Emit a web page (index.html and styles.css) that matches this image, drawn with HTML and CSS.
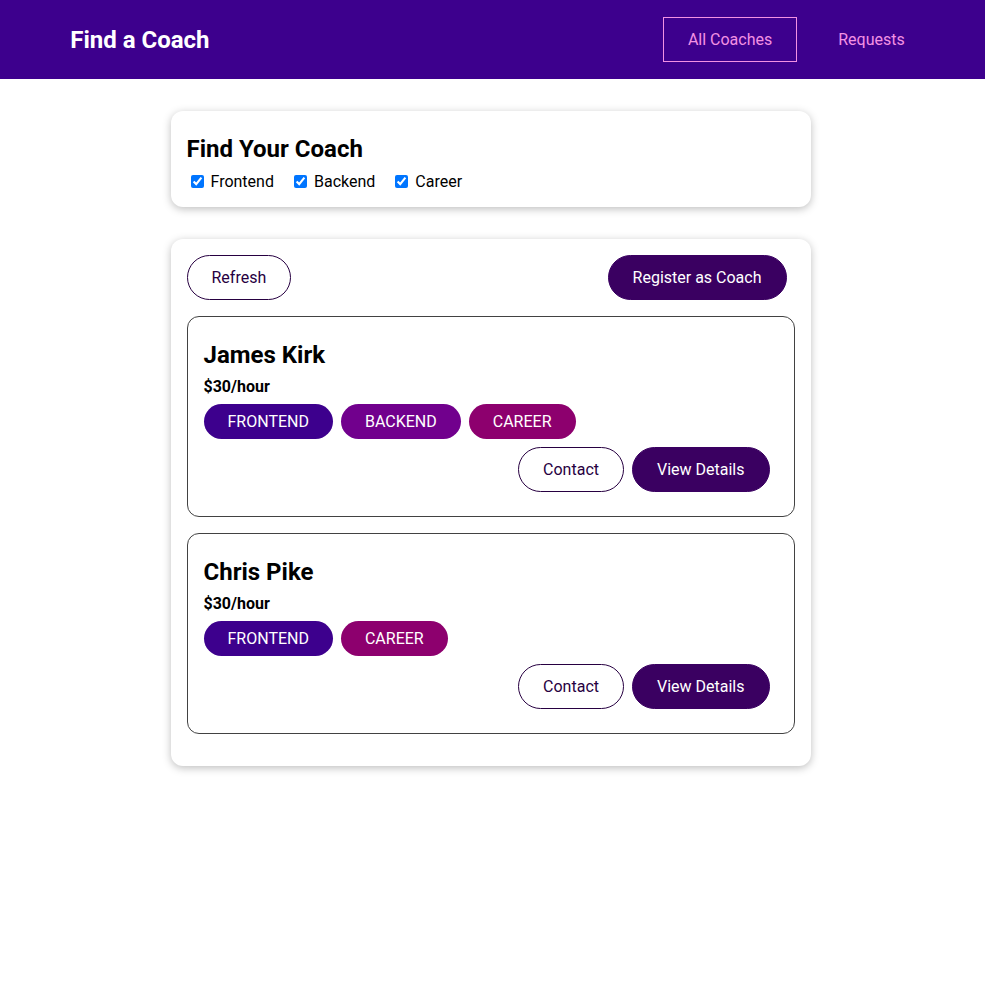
FILE: index.html
```html
<!DOCTYPE html>
<html lang="en">
<head>
<meta charset="utf-8">
<title>Find a Coach</title>
<link rel="stylesheet" href="styles.css">
</head>
<body>
<header class="header">
  <nav class="nav">
    <h1 class="brand"><a href="#" class="brand-link">Find a Coach</a></h1>
    <ul class="nav-list">
      <li class="nav-item"><a href="#" class="nav-link active">All Coaches</a></li>
      <li class="nav-item"><a href="#" class="nav-link">Requests</a></li>
    </ul>
  </nav>
</header>
<main class="main">
  <section class="card">
    <h2 class="filter-title">Find Your Coach</h2>
    <span class="filter-option"><input type="checkbox" id="frontend" checked><label for="frontend">Frontend</label></span><span class="filter-option"><input type="checkbox" id="backend" checked><label for="backend">Backend</label></span><span class="filter-option"><input type="checkbox" id="career" checked><label for="career">Career</label></span>
  </section>
  <section class="card">
    <div class="controls">
      <button class="btn outline">Refresh</button>
      <a href="#" class="btn">Register as Coach</a>
    </div>
    <ul class="coach-list">
      <li class="coach">
        <h3 class="coach-name">James Kirk</h3>
        <h4 class="coach-rate">$30/hour</h4>
        <div class="coach-row">
          <span class="badge frontend">FRONTEND</span><span class="badge backend">BACKEND</span><span class="badge career">CAREER</span>
        </div>
        <div class="coach-row actions">
          <a href="#" class="btn outline">Contact</a>
          <a href="#" class="btn">View Details</a>
        </div>
      </li>
      <li class="coach">
        <h3 class="coach-name">Chris Pike</h3>
        <h4 class="coach-rate">$30/hour</h4>
        <div class="coach-row">
          <span class="badge frontend">FRONTEND</span><span class="badge career">CAREER</span>
        </div>
        <div class="coach-row actions">
          <a href="#" class="btn outline">Contact</a>
          <a href="#" class="btn">View Details</a>
        </div>
      </li>
    </ul>
  </section>
</main>
</body>
</html>
```
FILE: styles.css
```css
* { box-sizing: border-box; }
html { font-family: Roboto, "Liberation Sans", sans-serif; }
body { margin: 0; }

.header {
  width: 100%;
  height: 79px;
  background-color: #3d008d;
  display: flex;
  justify-content: center;
  align-items: center;
}
.nav {
  width: 90%;
  margin: auto;
  display: flex;
  justify-content: space-between;
  align-items: center;
}
.brand { margin: 0; font-size: 24px; }
.brand-link {
  color: white;
  text-decoration: none;
  display: inline-block;
  padding: 12px 20px;
  border: 1px solid transparent;
}
.nav-list {
  list-style: none;
  margin: 0;
  padding: 0;
  display: flex;
}
.nav-item { margin: 0 6px 0 10px; }
.nav-link {
  text-decoration: none;
  color: #f391e3;
  display: inline-block;
  padding: 12px 24px;
  border: 1px solid transparent;
}
.nav-link.active { border-color: #f391e3; }

.main { padding-right: 4px; }

.card {
  border-radius: 12px;
  box-shadow: 0 2px 8px rgba(0, 0, 0, 0.26);
  padding: 16px;
  margin: 32px auto;
  max-width: 640px;
}
.filter-title { margin: 8px 0; font-size: 24px; }
.filter-option { margin-right: 16px; }
.filter-option input, .filter-option label { vertical-align: middle; }
.filter-option label { margin-left: 4px; }

.controls { display: flex; justify-content: space-between; }

.btn {
  text-decoration: none;
  padding: 12px 24px;
  font: inherit;
  background-color: #3a0061;
  border: 1px solid #3a0061;
  color: white;
  cursor: pointer;
  border-radius: 30px;
  margin-right: 8px;
  display: inline-block;
}
.btn.outline {
  background-color: transparent;
  border-color: #270041;
  color: #270041;
}

.coach-list { list-style: none; margin: 0; padding: 0; }
.coach {
  margin: 16px 0;
  border: 1px solid #424242;
  border-radius: 12px;
  padding: 16px;
}
.coach-name { font-size: 24px; margin: 8px 0; }
.coach-rate { margin: 8px 0; font-size: 16px; }
.coach-row { margin: 8px 0; }
.actions { display: flex; justify-content: flex-end; }

.badge {
  background-color: #ccc;
  color: #252525;
  border-radius: 30px;
  padding: 8px 24px;
  display: inline-block;
  margin-right: 8px;
}
.badge.frontend { background-color: #3d008d; color: white; }
.badge.backend { background-color: #71008d; color: white; }
.badge.career { background-color: #8d006e; color: white; }
```
